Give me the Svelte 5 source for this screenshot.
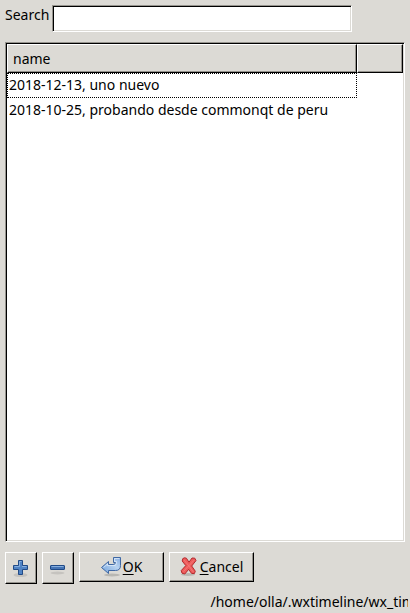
<script lang="ts">
  type Item = { date: string; text: string };

  let items = $state<Item[]>([
    { date: '2018-12-13', text: 'uno nuevo' },
    { date: '2018-10-25', text: 'probando desde commonqt de peru' }
  ]);
  let search = $state('');
  let selected = $state(0);

  const path = '/home/olla/.wxtimeline/wx_timeline.db';

  let visible = $derived(
    items.filter((i) => `${i.date}, ${i.text}`.toLowerCase().includes(search.toLowerCase()))
  );

  function addItem() {
    const date = new Date().toISOString().slice(0, 10);
    items = [{ date, text: search || 'nuevo' }, ...items];
    selected = 0;
  }

  function removeItem() {
    const item = visible[selected];
    items = items.filter((i) => i !== item);
    selected = 0;
  }
</script>

<div class="window">
  <div class="search">
    <label for="search">Search</label>
    <input id="search" class="sunken" type="text" bind:value={search} />
  </div>

  <div class="list sunken">
    <table>
      <thead>
        <tr>
          <th class="name">name</th>
          <th class="rest"></th>
        </tr>
      </thead>
      <tbody>
        {#each visible as item, i}
          <tr onclick={() => (selected = i)}>
            <td class:focused={i === selected}>{item.date}, {item.text}</td>
            <td></td>
          </tr>
        {/each}
      </tbody>
    </table>
  </div>

  <div class="buttons">
    <button class="square" aria-label="Add" onclick={addItem}>
      <svg width="18" height="20" viewBox="0 0 18 20">
        <ellipse cx="8.5" cy="17" rx="7" ry="2" fill="#000" opacity="0.1" />
        <path d="M6.5 2.5h4v5h5v4h-5v5h-4v-5h-5v-4h5z" fill="#4f83c4" stroke="#204a87" stroke-linejoin="round" />
        <path d="M7.5 8.5v-5h2M2.5 8.5h5M10 8.5h4.5" fill="none" stroke="#86aede" />
      </svg>
    </button>
    <button class="square" aria-label="Remove" onclick={removeItem}>
      <svg width="18" height="20" viewBox="0 0 18 20">
        <ellipse cx="8.5" cy="15" rx="7" ry="1.5" fill="#000" opacity="0.1" />
        <rect x="1.5" y="7.5" width="14" height="4" rx="0.5" fill="#4674b4" stroke="#204a87" />
        <path d="M2.5 8.5h12" stroke="#86aede" />
      </svg>
    </button>
    <button class="wide">
      <svg width="20" height="20" viewBox="1 0 20 20">
        <defs>
          <linearGradient id="arrow" x1="0" y1="1" x2="1" y2="0">
            <stop offset="0" stop-color="#6ea0dc" />
            <stop offset="0.6" stop-color="#b9d3f0" />
            <stop offset="1" stop-color="#86ace0" />
          </linearGradient>
        </defs>
        <ellipse cx="12" cy="18" rx="8" ry="1.5" fill="#000" opacity="0.16" />
        <path
          d="M1.5 10.5L8.5 4.5V7.5H13Q15.5 7.5 15.5 5.5H13.5V0.5H20.5V8.5Q20.5 13.5 15.5 13.5H8.5V16.5Z"
          fill="url(#arrow)" stroke="#3f68a4" stroke-linejoin="round" />
        <path d="M3.5 10.5L7.5 7V8.5H15Q16.5 8.5 16.5 4.5H14.5V1.5H19.5" fill="none" stroke="#e6f0fb" stroke-opacity="0.7" />
      </svg>
      <span><u>O</u>K</span>
    </button>
    <button class="wide">
      <svg width="18" height="20" viewBox="0 0 18 20">
        <ellipse cx="8" cy="17.5" rx="7" ry="1.5" fill="#000" opacity="0.16" />
        <path
          d="M4.5 0.8L6.4 1.2L9 5.2L12 1L14.8 1.2L16 3.6L11.7 9L15.3 14.2L14.4 16.6L11.6 16.4L8.6 12.4L4.8 17L2 16.2L1.2 13.6L5.8 8.6L2.2 4L2.8 1.6Z"
          fill="#ee5b5b" stroke="#b32a2e" stroke-linejoin="round" />
        <path d="M4 3L8.8 8.8L13.4 15M14 3.2L8.8 8.8L3.4 14.6" fill="none" stroke="#f58a8a" stroke-opacity="0.6" />
      </svg>
      <span><u>C</u>ancel</span>
    </button>
  </div>

  <footer class="status">
    <span></span>
    <span class="path">{path}</span>
  </footer>
</div>

<style>
  :global(body) {
    background: #dcdad5;
  }

  .window {
    display: flex;
    flex-direction: column;
    box-sizing: border-box;
    height: 100vh;
    padding: 5px 5px 0;
    background: #dcdad5;
    color: #000;
    font-family: 'Noto Sans', sans-serif;
    font-size: 14px;
    line-height: 20px;
    overflow: hidden;
  }

  .sunken {
    border: 1px solid;
    border-color: #96948e #fff #fff #96948e;
    background: #fff;
    box-shadow: inset 1px 1px #000, inset -1px -1px #dcdad5;
  }

  .search {
    display: flex;
    align-items: flex-start;
    margin-bottom: 10px;
  }

  .search label {
    width: 47px;
  }

  .search input {
    box-sizing: border-box;
    width: 75%;
    height: 27px;
    padding: 2px 4px;
    border-radius: 0;
    outline: none;
    font: inherit;
  }

  .list {
    flex: 1;
    padding: 1px;
    overflow: hidden;
  }

  table {
    width: 100%;
    border-collapse: separate;
    border-spacing: 0;
    table-layout: fixed;
  }

  th {
    box-sizing: border-box;
    height: 29px;
    padding: 0 5px;
    border: 1px solid;
    border-color: #fff #000 #000 #fff;
    background: #dcdad5;
    box-shadow: inset -1px -1px #96948e;
    font-weight: normal;
    text-align: left;
  }

  th.rest {
    width: 46px;
  }

  td {
    box-sizing: border-box;
    height: 25px;
    padding: 0 1px 2px;
    border: 1px solid transparent;
    white-space: nowrap;
  }

  td.focused {
    border: 1px dotted #000;
  }

  .buttons {
    display: flex;
    align-items: flex-start;
    gap: 5px;
    margin-top: 10px;
  }

  button {
    display: flex;
    align-items: center;
    justify-content: center;
    box-sizing: border-box;
    padding: 0;
    border: 1px solid;
    border-color: #fff #000 #000 #fff;
    border-radius: 0;
    background: #dcdad5;
    box-shadow: inset -1px -1px #96948e;
    color: inherit;
    font: inherit;
  }

  .square {
    width: 32px;
    height: 32px;
  }

  .wide {
    gap: 2px;
    width: 85px;
    height: 30px;
  }

  .wide u {
    text-underline-offset: 2px;
  }

  .status {
    display: grid;
    grid-template-columns: 1fr 1fr;
    margin: 8px -3px 0 0;
    padding-bottom: 1px;
  }

  .path {
    padding-left: 4px;
    white-space: nowrap;
    overflow: hidden;
  }
</style>
